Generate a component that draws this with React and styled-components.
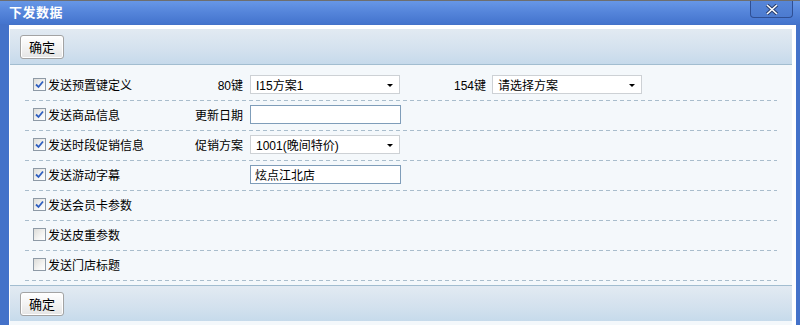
import React from "react";
import styled, { createGlobalStyle } from "styled-components";

const GlobalStyle = createGlobalStyle`
    html, body {
        margin: 0;
        padding: 0;
        background: #ffffff;
    }
    body {
        font-family: "Liberation Sans", "Noto Sans CJK SC", sans-serif;
        font-size: 12px;
        color: #000;
    }
`;

const font = `"Liberation Sans", "Noto Sans CJK SC", sans-serif`;

const Window = styled.div`
    width: 800px;
    height: 325px;
    box-sizing: border-box;
    border-top: 1px solid #6e6e6e;
    background: #4472c9;
    display: flex;
    flex-direction: column;
    overflow: hidden;
`;

const TitleBar = styled.div`
    height: 23px;
    flex: none;
    display: flex;
    align-items: flex-start;
    justify-content: space-between;
    padding: 0 7px 0 9px;
    background: linear-gradient(to bottom, #6797e6 0%, #5484da 50%, #4474cd 100%);
`;

const Title = styled.div`
    color: #ffffff;
    font-family: ${font};
    font-weight: bold;
    font-size: 13px;
    line-height: 23px;
    letter-spacing: 0.5px;
`;

const CloseButton = styled.div`
    width: 41px;
    height: 16px;
    border: 1px solid #2f4f94;
    border-top: none;
    border-radius: 0 0 4px 4px;
    background: linear-gradient(to bottom, #5786d8, #4c7bd0);
    display: flex;
    align-items: center;
    justify-content: center;
`;

const Panel = styled.div`
    flex: 1;
    margin: 1px 4px 0 9px;
    padding: 4px 4px 0 1px;
    background: #ffffff;
    display: flex;
    flex-direction: column;
`;

const Toolbar = styled.div`
    height: ${(p) => p.h}px;
    flex: none;
    display: flex;
    align-items: center;
    padding-left: 10px;
    background: linear-gradient(to bottom, #e2eaf2 0%, #d3e1ee 60%, #c6daeb 100%);
    border-top: ${(p) => (p.top ? "1px solid #a2bdd0" : "none")};
    border-bottom: ${(p) => (p.bottom ? "1px solid #a2bdd0" : "none")};
`;

const Button = styled.button`
    width: 44px;
    height: 24px;
    padding: 0;
    border: 1px solid #a3a3a3;
    border-radius: 3px;
    background: linear-gradient(to bottom, #ffffff 0%, #f3f3f3 50%, #e4e4e4 100%);
    font-family: ${font};
    font-size: 13px;
    color: #000;
    box-shadow: inset 0 0 0 1px #ffffff;
`;

const Content = styled.div`
    background: #f4f8fb;
    padding: 6px 15px 4px 15px;
`;

const Row = styled.div`
    height: 30px;
    box-sizing: border-box;
    padding: 0 0 3px 8px;
    display: flex;
    align-items: center;
    background: repeating-linear-gradient(
            to right,
            #a9bdcc 0 4px,
            transparent 4px 7px
        )
        bottom left / 100% 1px no-repeat;
`;

const CheckLabel = styled.label`
    width: 157px;
    display: flex;
    align-items: center;
    font-family: ${font};
    font-size: 12px;
    white-space: nowrap;
`;

const Box = styled.span`
    width: 11px;
    height: 11px;
    border: 1px solid #8e9aa6;
    background: linear-gradient(135deg, #dcdcd8 0%, #f4f4f2 60%, #ffffff 100%);
    margin-right: 2px;
    display: flex;
    align-items: center;
    justify-content: center;
`;

const FieldLabel = styled.span`
    width: ${(p) => p.w}px;
    text-align: right;
    margin-right: ${(p) => p.gap}px;
    font-family: ${font};
    font-size: 12px;
    white-space: nowrap;
`;

const Select = styled.div`
    width: 137px;
    height: 17px;
    border: 1px solid #cdd1d5;
    background: #ffffff;
    display: flex;
    align-items: center;
    justify-content: space-between;
    padding: 0 6px 0 5px;
    font-family: ${font};
    font-size: 12px;
`;

const Arrow = styled.span`
    width: 0;
    height: 0;
    border-left: 3px solid transparent;
    border-right: 3px solid transparent;
    border-top: 3px solid #000;
    margin-top: 2px;
`;

const TextInput = styled.div`
    width: 145px;
    height: 17px;
    margin-left: ${(p) => p.offset || 0}px;
    border: 1px solid #7f9db9;
    background: #ffffff;
    padding-left: 4px;
    display: flex;
    align-items: center;
    font-family: ${font};
    font-size: 12px;
`;

const Spacer = styled.div`
    flex: 1;
    background: #f4f8fb;
`;

const Check = ({ on }) => (
    <Box>
        {on && (
            <svg width="9" height="9" viewBox="0 0 9 9">
                <path
                    d="M1 4.5 L3.5 7 L8 1.5"
                    fill="none"
                    stroke="#2f5fc0"
                    strokeWidth="1.8"
                />
            </svg>
        )}
    </Box>
);

const rows = [
    { text: "发送预置键定义", on: true },
    { text: "发送商品信息", on: true },
    { text: "发送时段促销信息", on: true },
    { text: "发送游动字幕", on: true },
    { text: "发送会员卡参数", on: true },
    { text: "发送皮重参数", on: false },
    { text: "发送门店标题", on: false },
];

const renderExtra = (i) => {
    if (i === 0)
        return (
            <>
                <FieldLabel w={53} gap={7}>80键</FieldLabel>
                <Select>
                    I15方案1<Arrow />
                </Select>
                <FieldLabel w={86} gap={6}>154键</FieldLabel>
                <Select>
                    请选择方案<Arrow />
                </Select>
            </>
        );
    if (i === 1)
        return (
            <>
                <FieldLabel w={53} gap={7}>更新日期</FieldLabel>
                <TextInput />
            </>
        );
    if (i === 2)
        return (
            <>
                <FieldLabel w={53} gap={7}>促销方案</FieldLabel>
                <Select>
                    1001(晚间特价)<Arrow />
                </Select>
            </>
        );
    if (i === 3) return <TextInput offset={60}>炫点江北店</TextInput>;
    return null;
};

const App = () => {
    return (
        <>
            <GlobalStyle />
            <Window>
                <TitleBar>
                    <Title>下发数据</Title>
                    <CloseButton>
                        <svg width="14" height="11" viewBox="0 0 14 11">
                            <path
                                d="M2 1 L12 10 M12 1 L2 10"
                                stroke="#2a3f6e"
                                strokeWidth="3.6"
                            />
                            <path
                                d="M2 1 L12 10 M12 1 L2 10"
                                stroke="#ffffff"
                                strokeWidth="1.6"
                            />
                        </svg>
                    </CloseButton>
                </TitleBar>
                <Panel>
                    <Toolbar h={35} bottom>
                        <Button>确定</Button>
                    </Toolbar>
                    <Content>
                        {rows.map((r, i) => (
                            <Row key={r.text}>
                                <CheckLabel>
                                    <Check on={r.on} />
                                    {r.text}
                                </CheckLabel>
                                {renderExtra(i)}
                            </Row>
                        ))}
                    </Content>
                    <Toolbar h={35} top>
                        <Button>确定</Button>
                    </Toolbar>
                    <Spacer />
                </Panel>
            </Window>
        </>
    );
};

export default App;
